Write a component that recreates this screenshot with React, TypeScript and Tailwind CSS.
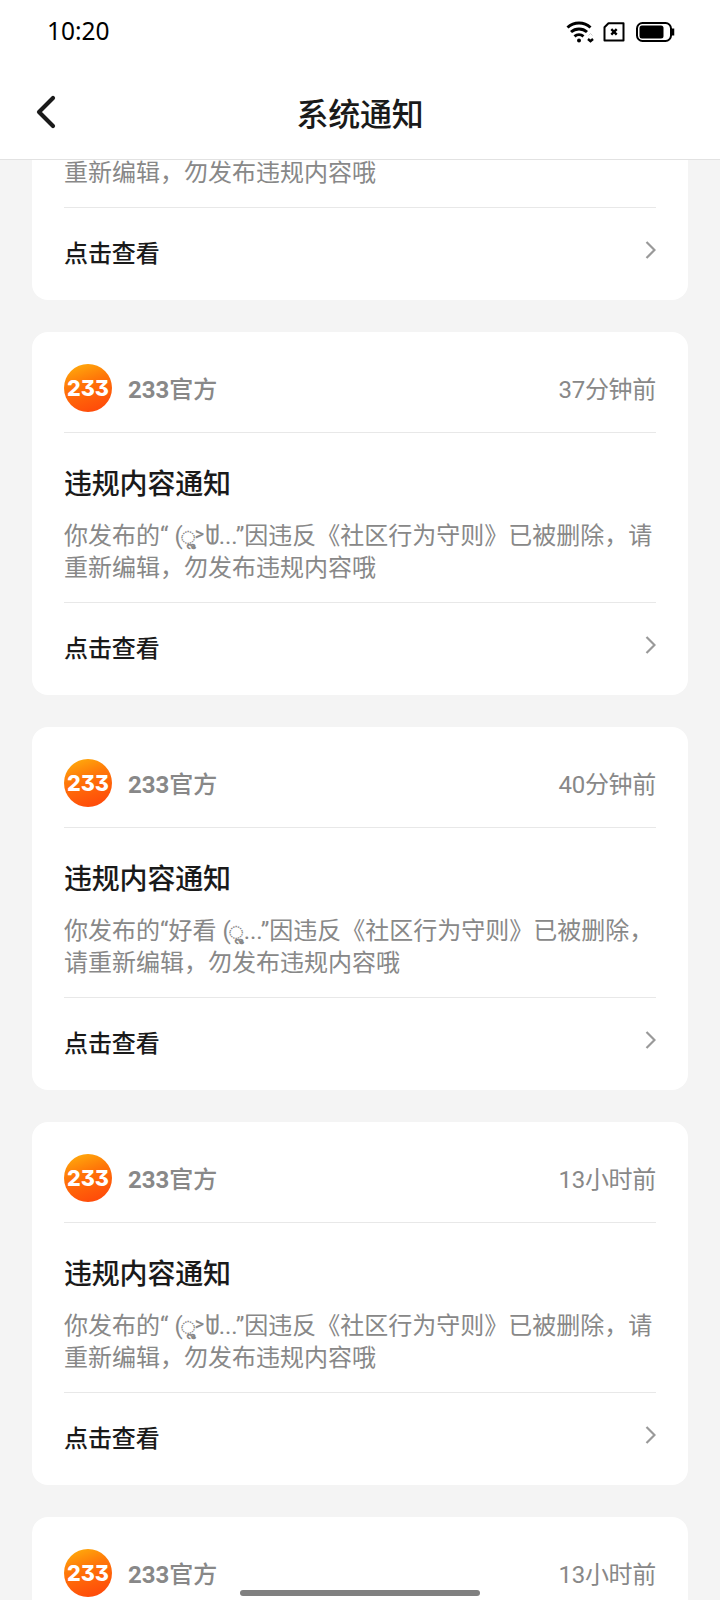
import type { ReactNode } from "react";

// Kaomoji symbols come from several fallback fonts, so each gets its own cell
const Vocalic = () => (
    <span className="-ml-0.5 inline-block w-[15px] whitespace-nowrap text-lg font-bold leading-none">ૢ</span>
);

const Face = () => (
    <>
        <Vocalic />
        <span className="relative -left-px -top-1 inline-block w-[10px] text-lg font-medium leading-none">&gt;</span>
        <span className="relative -left-0.5 inline-block w-[13px] text-[22px] font-bold leading-none">ꌂ</span>
    </>
);

const faceLines = [
    <>你发布的“ (<Face />...”因违反《社区行为守则》已被删除，请</>,
    "重新编辑，勿发布违规内容哦",
];

const notices: { time: string; lines: ReactNode[] }[] = [
    { time: "37分钟前", lines: faceLines },
    {
        time: "40分钟前",
        lines: [<>你发布的“好看 (<Vocalic />...”因违反《社区行为守则》已被删除，</>, "请重新编辑，勿发布违规内容哦"],
    },
    { time: "13小时前", lines: faceLines },
    { time: "13小时前", lines: faceLines },
];

function StatusBar() {
    return (
        <div className="flex h-16 items-center justify-between pl-[47px] pr-11">
            <span className="-mt-0.5 font-['Noto_Sans',sans-serif] text-[24.5px] leading-none text-black">10:20</span>
            <div className="flex items-center">
                <svg width="28" height="22" viewBox="0 0 28 22" fill="none" stroke="#000" strokeWidth="3">
                    <path d="M1.500 6.500a17 17 0 0 1 23 0" />
                    <path d="M5 11a12 12 0 0 1 16 0" />
                    <path d="M8.500 15.300a7 7 0 0 1 9 0" />
                    <circle cx="13" cy="19.500" r="2" fill="#000" stroke="none" />
                    <path d="M22 18l2.500 2.200 2.500-2.200" strokeWidth="2.400" />
                    <path d="M22.500 14.500l2-2 2 2" stroke="#ccc" strokeWidth="1" />
                </svg>
                <svg className="ml-[9px]" width="22" height="20" viewBox="0 0 22 20" fill="none" stroke="#000" strokeWidth="2">
                    <path d="M5.500 1.200H20.500V18.500H1.500V5.200Z" strokeLinejoin="round" />
                    <path d="M8.300 7.200l5.400 5.400M13.700 7.200l-5.400 5.400" strokeWidth="2.400" />
                </svg>
                <svg className="ml-[11px]" width="40" height="20" viewBox="0 0 40 20" fill="none">
                    <rect x="1" y="1" width="34" height="18" rx="5.500" stroke="#000" strokeWidth="2" />
                    <rect x="3.500" y="3.500" width="24" height="13" rx="2.500" fill="#000" />
                    <path d="M37 6.500v7" stroke="#000" strokeWidth="2.500" />
                </svg>
            </div>
        </div>
    );
}

function Logo() {
    return (
        <svg width="48" height="48" viewBox="0 0 48 48">
            <defs>
                <linearGradient id="logo" x1="0.15" y1="0" x2="0.5" y2="1">
                    <stop offset="0" stopColor="#ffae0c" />
                    <stop offset="0.45" stopColor="#ff7408" />
                    <stop offset="1" stopColor="#ff4d0a" />
                </linearGradient>
            </defs>
            <circle cx="24" cy="24" r="24" fill="url(#logo)" />
            <text
                x="3"
                y="31.500"
                textLength="42"
                lengthAdjust="spacingAndGlyphs"
                className="fill-white font-['Inter'] text-[22px] font-extrabold [font-feature-settings:'cv09']"
            >
                233
            </text>
        </svg>
    );
}

function CardFooter() {
    return (
        <div className="flex h-[93px] items-center justify-between border-t border-[#e8e8e8]">
            <span className="text-2xl font-medium tracking-[-0.1px] text-[#1a1a1a]">点击查看</span>
            <svg className="-mt-2" width="11" height="20" viewBox="0 0 11 20" fill="none" stroke="#999" strokeWidth="2.200">
                <path d="M1.500 2l8 8-8 8" />
            </svg>
        </div>
    );
}

function NoticeCard({ time, lines }: { time: string; lines: ReactNode[] }) {
    return (
        <div className="h-[363px] shrink-0 rounded-2xl bg-white px-8">
            <div className="flex h-[101px] items-start border-b border-[#e8e8e8] pt-8">
                <Logo />
                <span className="ml-4 mt-2.5 text-2xl font-medium text-[#888]">
                    <span className="font-bold">233</span>官方
                </span>
                <span className="ml-auto mt-2.5 text-2xl tracking-[-0.3px] text-[#888]">{time}</span>
            </div>
            <div className="h-[169px] pt-8">
                <h2 className="text-[28px] font-medium leading-[40px] tracking-[-0.2px] text-[#1a1a1a]">违规内容通知</h2>
                <div className="mt-[15px] text-2xl leading-8 text-[#888]">
                    {lines.map((line, i) => (
                        <p key={i} className="h-8 whitespace-nowrap">{line}</p>
                    ))}
                </div>
            </div>
            <CardFooter />
        </div>
    );
}

export default function App() {
    return (
        <div className="relative flex h-[1600px] w-[720px] flex-col overflow-hidden bg-[#f4f4f4] font-[Roboto,'Noto_Sans_CJK_SC',sans-serif]">
            <header className="h-40 shrink-0 border-b border-[#e2e2e2] bg-white">
                <StatusBar />
                <div className="grid h-24 grid-cols-3 items-center">
                    <svg className="ml-9" width="20" height="34" viewBox="0 0 20 34" fill="none" stroke="#1a1a1a" strokeWidth="4.200" strokeLinecap="round" strokeLinejoin="round">
                        <path d="M17 3L3 17l14 14" />
                    </svg>
                    <h1 className="mt-1.5 text-center text-[32px] font-medium tracking-[-0.3px] text-[#1a1a1a]">系统通知</h1>
                </div>
            </header>

            <main className="flex min-h-0 flex-1 flex-col gap-8 overflow-hidden px-8">
                <div className="h-[140px] shrink-0 rounded-b-2xl bg-white px-8">
                    <div className="flex h-[47px] items-end pb-[18px] text-2xl leading-8 text-[#888]">
                        <p>重新编辑，勿发布违规内容哦</p>
                    </div>
                    <CardFooter />
                </div>
                {notices.map((notice, i) => (
                    <NoticeCard key={i} {...notice} />
                ))}
            </main>

            <div className="absolute bottom-1 left-60 h-1.5 w-60 rounded-full bg-[#808080]" />
        </div>
    );
}
